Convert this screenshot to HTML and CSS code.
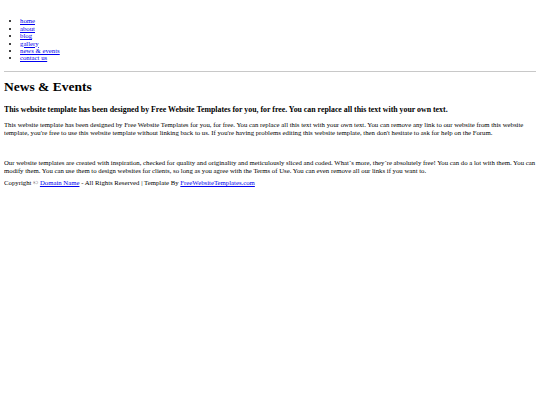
FILE: index.html
```html
<!DOCTYPE html>
<html>
<head>
<meta charset="utf-8">
<title>News &amp; Events</title>
<link rel="stylesheet" href="styles.css">
</head>
<body>
<div class="header">
  <ul class="nav">
    <li><a href="#">home</a></li>
    <li><a href="#">about</a></li>
    <li><a href="#">blog</a></li>
    <li><a href="#">gallery</a></li>
    <li><a href="#">news &amp; events</a></li>
    <li><a href="#">contact us</a></li>
  </ul>
</div>
<div class="content">
  <h1 class="title">News &amp; Events</h1>
  <h2 class="lead">This website template has been designed by Free Website Templates for you, for free. You can replace all this text with your own text.</h2>
  <p class="text first">This website template has been designed by Free Website Templates for you, for free. You can replace all this text with your own text. You can remove any link to our website from this website template, you're free to use this website template without linking back to us. If you're having problems editing this website template, then don't hesitate to ask for help on the Forum.</p>
  <p class="text second">Our website templates are created with inspiration, checked for quality and originality and meticulously sliced and coded. What´s more, they´re absolutely free! You can do a lot with them. You can modify them. You can use them to design websites for clients, so long as you agree with the Terms of Use. You can even remove all our links if you want to.</p>
</div>
<div class="footer">
  <p class="copy">Copyright © <a href="#">Domain Name</a> - All Rights Reserved | Template By <a href="#">FreeWebsiteTemplates.com</a></p>
</div>
</body>
</html>
```
FILE: styles.css
```css
html { background: #fff; }
body {
  margin: 4px;
  font-family: "Liberation Serif", "Times New Roman", serif;
  font-size: 6.75px;
  color: #000;
}
a { color: #00e; text-decoration: underline; }
.header {
  padding-top: 13.3px;
  padding-bottom: 9.3px;
  border-bottom: 1px solid #c8c8c8;
}
.nav {
  margin: 0;
  padding-left: 16px;
  font-size: 6.75px;
  line-height: 7.4px;
}
.title {
  font-size: 13.5px;
  line-height: 15px;
  font-weight: bold;
  margin: 7px 0 0;
}
.lead {
  font-size: 7.85px;
  line-height: 9px;
  font-weight: bold;
  margin: 11px 0 0;
}
.text { margin: 0; line-height: 7.8px; }
.first { margin-top: 7px; }
.second { margin-top: 22.6px; }
.copy { margin: 4.5px 0 0; line-height: 7.8px; }
```
